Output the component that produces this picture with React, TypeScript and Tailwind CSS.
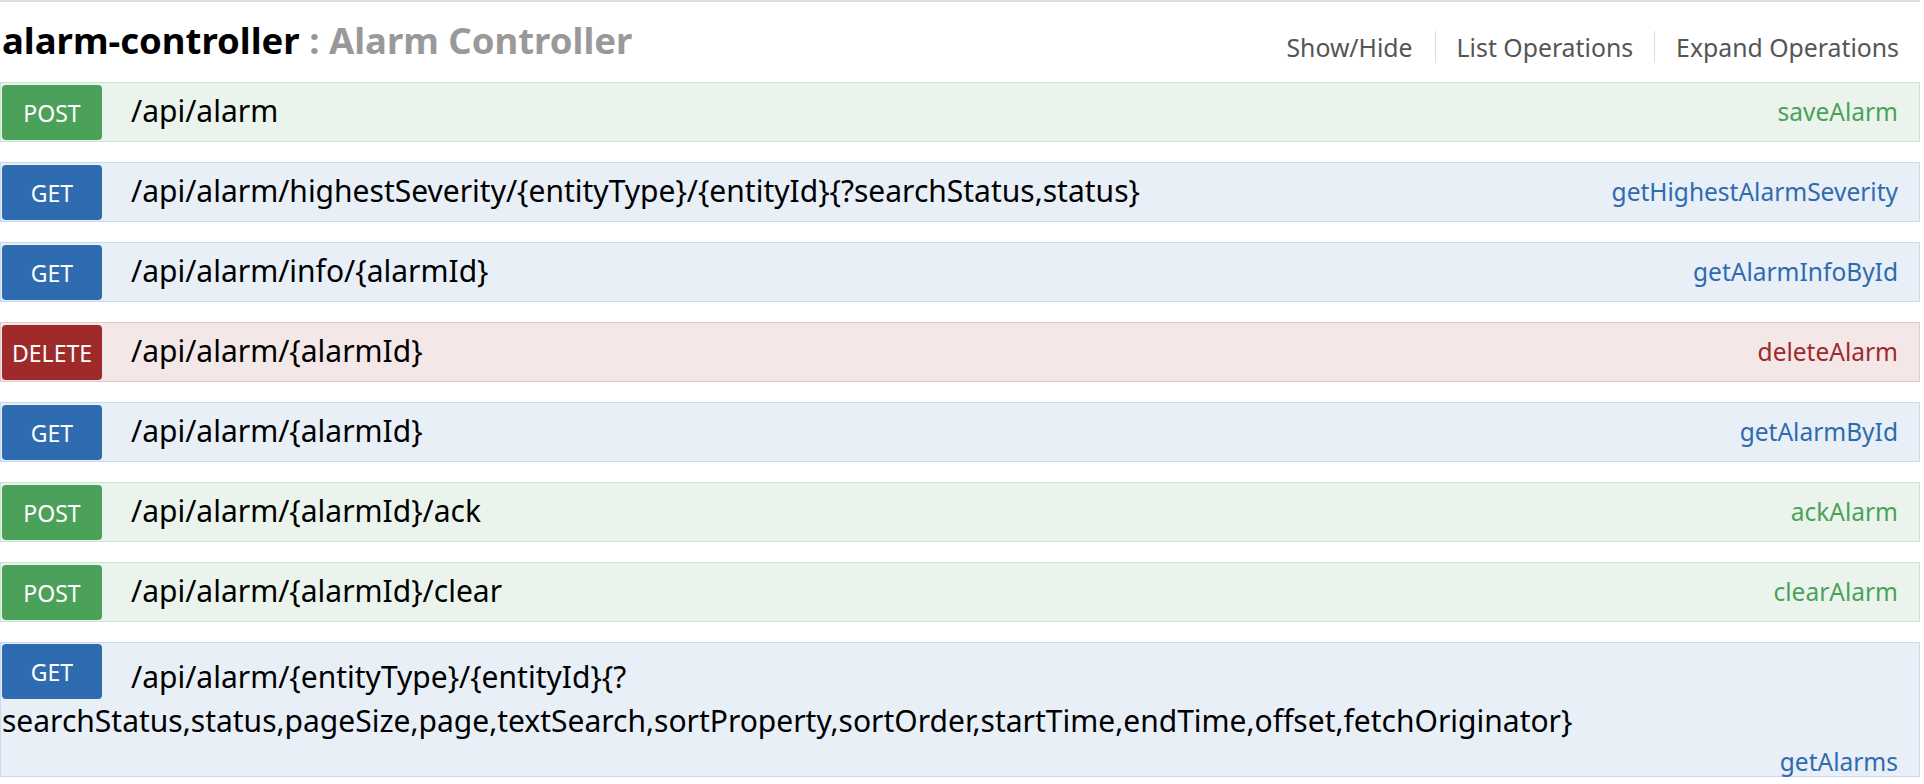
import React from "react";

type Method = "GET" | "POST" | "DELETE";

interface Operation {
  method: Method;
  path: string;
  nickname: string;
  wrap?: boolean;
}

const OPERATIONS: Operation[] = [
  { method: "POST", path: "/api/alarm", nickname: "saveAlarm" },
  {
    method: "GET",
    path: "/api/alarm/highestSeverity/{entityType}/{entityId}{?searchStatus,status}",
    nickname: "getHighestAlarmSeverity",
  },
  { method: "GET", path: "/api/alarm/info/{alarmId}", nickname: "getAlarmInfoById" },
  { method: "DELETE", path: "/api/alarm/{alarmId}", nickname: "deleteAlarm" },
  { method: "GET", path: "/api/alarm/{alarmId}", nickname: "getAlarmById" },
  { method: "POST", path: "/api/alarm/{alarmId}/ack", nickname: "ackAlarm" },
  { method: "POST", path: "/api/alarm/{alarmId}/clear", nickname: "clearAlarm" },
  {
    method: "GET",
    path: "/api/alarm/{entityType}/{entityId}{?searchStatus,status,pageSize,page,textSearch,sortProperty,sortOrder,startTime,endTime,offset,fetchOriginator}",
    nickname: "getAlarms",
    wrap: true,
  },
];

const STYLES: Record<Method, { row: string; badge: string; name: string }> = {
  POST: {
    row: "bg-[#eaf4ec] border-[#c9e6d2]",
    badge: "bg-[#4ba159]",
    name: "text-[#4ba159]",
  },
  GET: {
    row: "bg-[#e8eff7] border-[#c8d9ea]",
    badge: "bg-[#2e6bb0]",
    name: "text-[#2e6bb0]",
  },
  DELETE: {
    row: "bg-[#f3e7e7] border-[#e6c9ca]",
    badge: "bg-[#9e2a2a]",
    name: "text-[#9e2a2a]",
  },
};

function Badge({ method, className = "" }: { method: Method; className?: string }) {
  return (
    <span
      className={`w-[100px] h-[55px] overflow-hidden rounded-[4px] text-white text-[23px] leading-[57px] text-center ${STYLES[method].badge} ${className}`}
    >
      {method}
    </span>
  );
}

function OperationRow({ op }: { op: Operation }) {
  const s = STYLES[op.method];

  if (op.wrap) {
    // long path wraps under the badge, nickname drops to its own line
    return (
      <div className={`h-[135px] border px-[1px] ${s.row}`}>
        <div className="text-[30px] leading-[44px] text-black break-words">
          <Badge method={op.method} className="inline-block align-baseline mt-[1px] mb-[-11px] mr-[29px]" />
          <span>{op.path}</span>
        </div>
        <div className={`text-right pr-[20px] text-[24.5px] leading-[38px] ${s.name}`}>
          {op.nickname}
        </div>
      </div>
    );
  }

  return (
    <div className={`h-[60px] border px-[1px] flex items-center ${s.row}`}>
      <Badge method={op.method} className="block shrink-0" />
      <span className="ml-[29px] text-[30px] text-black leading-none -mt-[3px]">{op.path}</span>
      <span className={`ml-auto pr-[20px] text-[24.5px] leading-none ${s.name}`}>
        {op.nickname}
      </span>
    </div>
  );
}

export default function App() {
  return (
    <div className="w-[1920px] bg-white font-['Noto_Sans','Open_Sans',sans-serif] border-t-2 border-[#dddddd] min-h-[784px]">
      <div className="h-[80px] flex justify-between items-start">
        <h2 className="mt-[18px] ml-[2px] text-[36.5px] leading-[40px] font-bold">
          <span className="text-black">alarm-controller</span>
          <span className="text-[#999999]"> : Alarm Controller</span>
        </h2>
        <ul className="mt-[29px] mr-[21px] flex text-[24.8px] leading-[32px] text-[#555555]">
          <li className="pr-[22px]">Show/Hide</li>
          <li className="px-[21px] border-l border-[#dddddd]">List Operations</li>
          <li className="pl-[21px] border-l border-[#dddddd]">Expand Operations</li>
        </ul>
      </div>
      <div className="flex flex-col gap-[20px]">
        {OPERATIONS.map((op) => (
          <OperationRow key={op.nickname} op={op} />
        ))}
      </div>
    </div>
  );
}
